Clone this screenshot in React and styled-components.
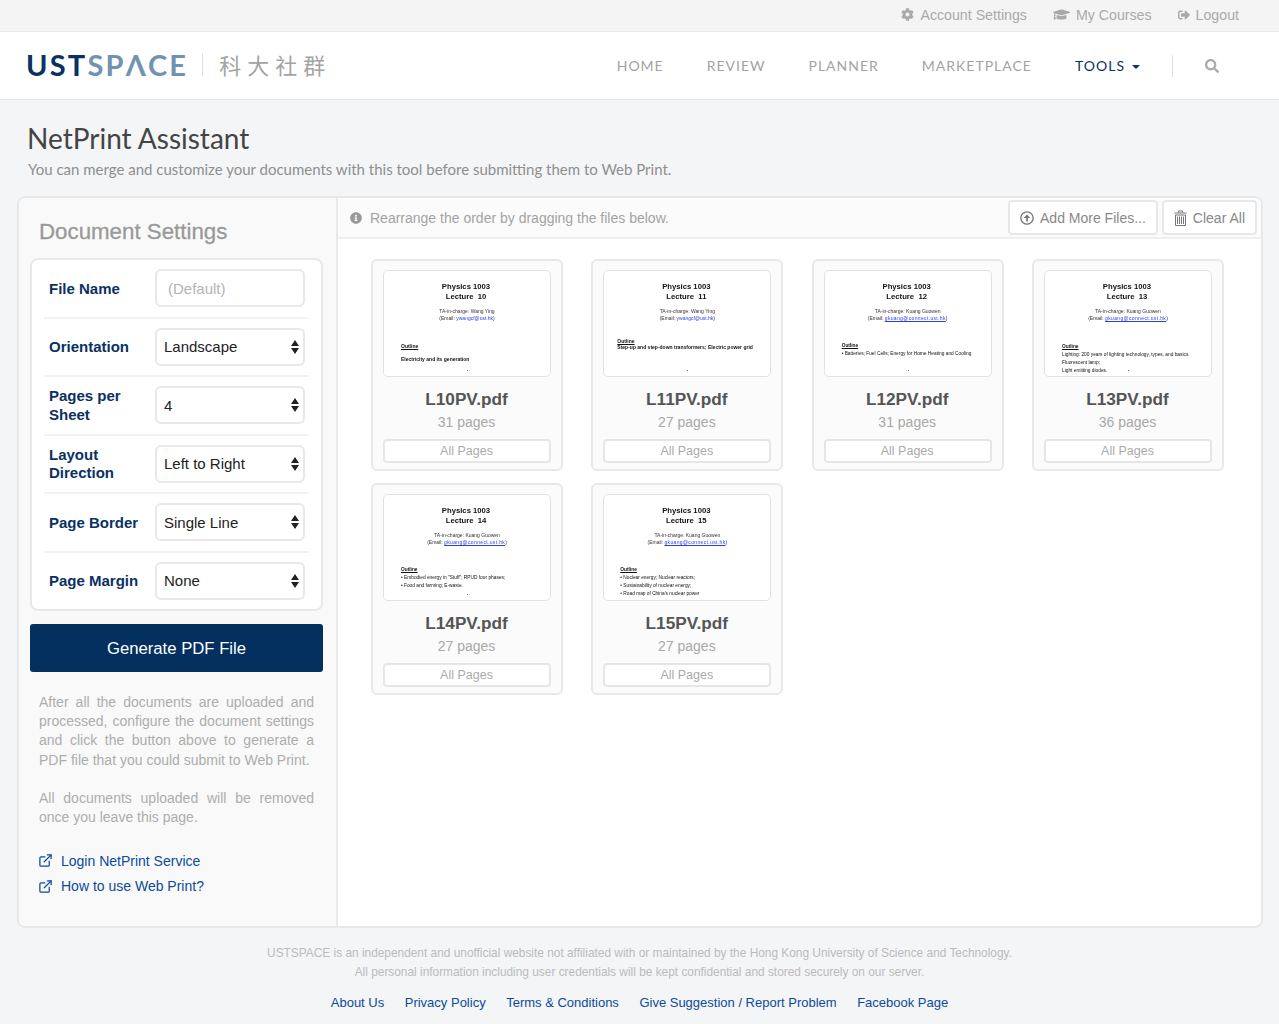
import React from 'react';
import styled, { createGlobalStyle } from 'styled-components';
import { FaCog, FaGraduationCap, FaSignOutAlt, FaInfoCircle, FaRegArrowAltCircleUp, FaSearch } from 'react-icons/fa';
import { ExternalLink } from 'lucide-react';

const GlobalStyle = createGlobalStyle`
  html, body { margin: 0; padding: 0; background: #f4f5f7; }
  body { font-family: "Liberation Sans", Arial, sans-serif; }
  * { box-sizing: border-box; }
`;

const Page = styled.div`
  width: 1279px;
  height: 1024px;
  overflow: hidden;
  background: #f4f5f7;
`;

const TopBar = styled.div`
  height: 32px;
  background: #f4f4f4;
  border-bottom: 1px solid #e8e8e8;
  display: flex;
  justify-content: flex-end;
  align-items: center;
  gap: 26px;
  padding: 0 40px 2px 0;
`;

const TopLink = styled.a`
  display: flex;
  align-items: center;
  gap: ${p => p.$gap || 6}px;
  font-size: 14.2px;
  color: #aaa;
  svg { font-size: ${p => p.$icon || 13}px; color: #aaa; }
`;

const Header = styled.header`
  height: 68px;
  background: #fff;
  border-bottom: 1px solid #e6e6e6;
  display: flex;
  align-items: center;
  padding: 0 60px 0 26px;
`;

const Logo = styled.div`
  display: flex;
  align-items: center;
  flex: 1;
  margin-top: -2px;
`;

const LogoWord = styled.span`
  font-family: Lato, sans-serif;
  font-weight: 700;
  font-size: 29px;
  letter-spacing: 2.2px;
  line-height: 1;
  color: #0a3161;
  span { color: #7193b2; }
`;

const LogoRule = styled.i`
  width: 1px;
  height: 22px;
  background: #ddd;
  margin: 0 16px 0 14px;
`;

const LogoChinese = styled.span`
  margin-top: -2px;
  font-family: "Noto Sans CJK TC", sans-serif;
  font-size: 22px;
  letter-spacing: 6px;
  line-height: 1;
  color: #a3a3a3;
`;

const Nav = styled.nav`
  display: flex;
  align-items: center;
  gap: 43px;
`;

const NavLink = styled.a`
  font-family: Lato, sans-serif;
  font-size: 14px;
  letter-spacing: 1px;
  color: ${p => (p.$active ? '#0a3161' : '#a3a3a3')};
  display: flex;
  align-items: center;
`;

const Caret = styled.i`
  width: 0;
  height: 0;
  margin-left: 7px;
  margin-top: 3px;
  border-left: 4px solid transparent;
  border-right: 4px solid transparent;
  border-top: 4px solid #0a3161;
`;

const NavRule = styled.i`
  width: 1px;
  height: 22px;
  background: #ddd;
  margin-left: -11px;
`;

const SearchBtn = styled.span`
  display: flex;
  color: #aaa;
  font-size: 14px;
  margin-left: -11px;
`;

const TitleBlock = styled.div`
  padding: 21px 28px 0;
  height: 96px;
`;

const Title = styled.h1`
  margin: 0 0 0 -1px;
  font-family: Lato, sans-serif;
  font-weight: 400;
  font-size: 28px;
  line-height: 34px;
  color: #444;
`;

const Subtitle = styled.p`
  margin: 4px 0 0;
  font-family: Lato, sans-serif;
  font-size: 15px;
  line-height: 20px;
  color: #8f8f8f;
`;

const Panel = styled.div`
  margin: 0 16px 0 17px;
  height: 732px;
  background: #fff;
  border: 2px solid #e7e8e9;
  border-radius: 8px;
  overflow: hidden;
  display: flex;
`;

const Sidebar = styled.aside`
  width: 319px;
  flex: none;
  background: #f9f9f9;
  border-right: 2px solid #e9e9e9;
  padding: 20px 13px 0 11px;
`;

const SideTitle = styled.h2`
  margin: 0 0 13px 9px;
  font-size: 22.3px;
  line-height: 27px;
  font-weight: 400;
  -webkit-text-stroke: 0.3px #999;
  color: #999;
`;

const FormBox = styled.div`
  background: #fff;
  border: 2px solid #e8e8e8;
  border-radius: 8px;
  padding: 0 12px;
`;

const Row = styled.div`
  height: ${p => (p.$last ? '56.5px' : '58.5px')};
  display: flex;
  align-items: center;
  justify-content: space-between;
  padding: 0 4px 0 5px;
  border-bottom: ${p => (p.$last ? 'none' : '2px solid #f2f2f2')};
`;

const Label = styled.label`
  width: 100px;
  padding-top: 1px;
  font-size: 15px;
  font-weight: 700;
  line-height: 18.5px;
  color: #0a3161;
`;

const TextInput = styled.input`
  width: 150px;
  height: 38px;
  border: 2px solid #e8e8e8;
  border-radius: 6px;
  padding: 0 11px;
  font: 15px "Liberation Sans", Arial, sans-serif;
  background: #fff;
  &::placeholder { color: #b4b4b4; opacity: 1; }
`;

const SelectWrap = styled.div`
  position: relative;
  width: 150px;
  height: 38px;
`;

const Select = styled.select`
  width: 100%;
  height: 100%;
  appearance: none;
  border: 2px solid #e8e8e8;
  border-radius: 6px;
  padding: 0 0 0 7px;
  font: 15px "Liberation Sans", Arial, sans-serif;
  color: #222;
  background: #fff;
`;

const SelectArrows = styled.svg`
  position: absolute;
  right: 6px;
  top: 12px;
  width: 8px;
  height: 14px;
`;

const Generate = styled.button`
  display: block;
  width: 293px;
  height: 48px;
  margin-top: 13px;
  padding-top: 2px;
  border: none;
  border-radius: 3px;
  background: #03305f;
  color: #fff;
  font: 16.7px "Liberation Sans", Arial, sans-serif;
`;

const Note = styled.p`
  margin: ${p => p.$top}px 0 0;
  padding: 0 9px;
  font-size: 14px;
  line-height: 19.2px;
  color: #adadad;
  text-align: justify;
`;

const SideLink = styled.a`
  display: flex;
  align-items: center;
  gap: 8px;
  padding-left: 8px;
  height: 25.5px;
  font-size: 14px;
  color: #0d4a9a;
  svg { width: 15px; height: 15px; }
`;

const SideLinks = styled.div`
  margin-top: 21px;
`;

const Main = styled.main`
  flex: 1;
  min-width: 0;
`;

const Toolbar = styled.div`
  height: 41px;
  background: #fbfbfb;
  border-bottom: 2px solid #efefef;
  display: flex;
  align-items: center;
  padding: 0 4px 0 12px;
  gap: 4px;
`;

const Hint = styled.div`
  flex: 1;
  display: flex;
  align-items: center;
  gap: 8px;
  font-size: 14px;
  color: #a3a3a3;
  svg { font-size: 12px; color: #999; }
`;

const ToolButton = styled.button`
  height: 35px;
  padding: 0 10px;
  display: flex;
  align-items: center;
  gap: 6px;
  background: #fff;
  border: 2px solid #e8e8e8;
  border-radius: 4px;
  font: 14px "Liberation Sans", Arial, sans-serif;
  color: #888;
  svg { font-size: 14px; color: #777; flex: none; }
`;

const Grid = styled.div`
  display: grid;
  grid-template-columns: repeat(4, 192px);
  column-gap: 28.33px;
  row-gap: 12px;
  padding: 20px 0 0 33px;
`;

const Card = styled.div`
  height: 212px;
  background: #fbfbfb;
  border: 2px solid #e8e8e8;
  border-radius: 6px;
  padding: 9px 10px 0;
  display: flex;
  flex-direction: column;
  align-items: center;
`;

const Thumb = styled.div`
  position: relative;
  width: 168px;
  height: 107px;
  flex: none;
  background: #fff;
  border: 1.5px solid #e2e2e2;
  border-radius: 5px;
  overflow: hidden;
  padding-top: 11px;
  color: #111;
  filter: blur(0.25px);
`;

const ThumbTitle = styled.div`
  padding-right: 2px;
  text-align: center;
  font-size: 7.7px;
  font-weight: 700;
  line-height: 9.6px;
  white-space: pre;
`;

const ThumbMeta = styled.div`
  margin-top: 7px;
  text-align: center;
  font-size: 5px;
  line-height: 7.2px;
  color: #333;
  span {
    color: #2a3fe0;
    letter-spacing: ${p => (p.$plain ? '0' : '0.35px')};
    text-decoration: ${p => (p.$plain ? 'none' : 'underline')};
  }
`;

const ThumbBody = styled.div`
  margin-top: ${p => p.$top}px;
  padding-left: ${p => p.$left}px;
  font-size: ${p => (p.$bold ? 5 : 4.8)}px;
  line-height: ${p => p.$line}px;
  white-space: nowrap;
  font-weight: ${p => (p.$bold ? 700 : 400)};
  u { display: block; font-weight: 700; margin-bottom: ${p => p.$under}px; }
`;

const ThumbDot = styled.i`
  position: absolute;
  left: 50%;
  bottom: 5px;
  width: 1px;
  height: 1px;
  background: #777;
`;

const FileName = styled.div`
  margin-top: 12px;
  padding-right: 1px;
  font-size: 17.2px;
  line-height: 20px;
  font-weight: 700;
  color: #555;
`;

const PageCount = styled.div`
  margin-top: 4px;
  padding-right: 1px;
  font-size: 14px;
  line-height: 18px;
  color: #a8a8a8;
`;

const PageRange = styled.div`
  margin-top: 8px;
  width: 168px;
  height: 24px;
  flex: none;
  padding-right: 1px;
  background: #fff;
  border: 2px solid #e6e6e6;
  border-radius: 4px;
  text-align: center;
  font-size: 12.5px;
  line-height: 21px;
  color: #aaa;
`;

const Footer = styled.footer`
  padding-top: 16px;
  text-align: center;
  font-size: 11.88px;
  line-height: 19px;
  color: #bbb;
`;

const FooterLinks = styled.div`
  margin-top: 11px;
  display: flex;
  justify-content: center;
  gap: 20.5px;
  font-size: 13px;
  line-height: 19px;
  color: #0d4a9a;
`;

const settings = [
  { label: 'Orientation', value: 'Landscape' },
  { label: 'Pages per Sheet', value: '4' },
  { label: 'Layout Direction', value: 'Left to Right' },
  { label: 'Page Border', value: 'Single Line' },
  { label: 'Page Margin', value: 'None', last: true },
];

const files = [
  { name: 'L10PV.pdf', pages: 31, lecture: 'Lecture  10', ta: 'TA-in-charge: Wang Ying', email: 'ywangcf@ust.hk', plain: true, top: 19, left: 17, line: 9, under: 4, bold: true, lines: ['Electricity and its generation'] },
  { name: 'L11PV.pdf', pages: 27, lecture: 'Lecture  11', ta: 'TA-in-charge: Wang Ying', email: 'ywangcf@ust.hk', plain: true, top: 15, left: 13, line: 6, under: 0, bold: true, lines: ['Step-up and step-down transformers;  Electric power grid'] },
  { name: 'L12PV.pdf', pages: 31, lecture: 'Lecture  12', ta: 'TA-in-charge: Kuang Guowen', email: 'gkuang@connect.ust.hk', top: 19, left: 17, line: 7, under: 1, lines: ['• Batteries; Fuel Cells; Energy for Home Heating and Cooling'] },
  { name: 'L13PV.pdf', pages: 36, lecture: 'Lecture  13', ta: 'TA-in-charge: Kuang Guowen', email: 'gkuang@connect.ust.hk', top: 20, left: 17, line: 8, under: 0, lines: ['Lighting: 200 years of lighting technology, types, and basics.', 'Fluorescent lamp;', 'Light emitting diodes.'] },
  { name: 'L14PV.pdf', pages: 27, lecture: 'Lecture  14', ta: 'TA-in-charge: Kuang Guowen', email: 'gkuang@connect.ust.hk', top: 19, left: 17, line: 8, under: 0, lines: ['• Embodied energy in "Stuff"; RPUD four phases;', '• Food and farming; E-waste.'] },
  { name: 'L15PV.pdf', pages: 27, lecture: 'Lecture  15', ta: 'TA-in-charge: Kuang Guowen', email: 'gkuang@connect.ust.hk', top: 19, left: 16, line: 8, under: 0, lines: ['• Nuclear energy; Nuclear reactors;', '• Sustainability of nuclear energy;', '• Road map of  China\'s nuclear power'] },
];

function TrashIcon() {
  return (
    <svg width="13" height="16" viewBox="0 0 13 16" fill="none" stroke="currentColor" strokeWidth="1">
      <path d="M4.500 2.500V1h4v1.500M.5 3h12M1.500 5h10v10.500h-10z" />
      <path d="M3.500 6.500v7.500M5.500 6.500v7.500M7.500 6.500v7.500M9.500 6.500v7.500" />
    </svg>
  );
}

function SelectField({ label, value, last }) {
  return (
    <Row $last={last}>
      <Label>{label}</Label>
      <SelectWrap>
        <Select defaultValue={value}>
          <option>{value}</option>
        </Select>
        <SelectArrows viewBox="0 0 8 14">
          <path d="M4 0 8 6H0zM4 14 0 8h8z" fill="#222" />
        </SelectArrows>
      </SelectWrap>
    </Row>
  );
}

function FileCard({ file }) {
  return (
    <Card>
      <Thumb>
        <ThumbTitle>{`Physics 1003\n${file.lecture}`}</ThumbTitle>
        <ThumbMeta $plain={file.plain}>
          {file.ta}<br />(Email: <span>{file.email}</span>)
        </ThumbMeta>
        <ThumbBody $top={file.top} $left={file.left} $line={file.line} $under={file.under} $bold={file.bold}>
          <u>Outline</u>
          {file.lines.map(l => <div key={l}>{l}</div>)}
        </ThumbBody>
        <ThumbDot />
      </Thumb>
      <FileName>{file.name}</FileName>
      <PageCount>{file.pages} pages</PageCount>
      <PageRange>All Pages</PageRange>
    </Card>
  );
}

export default function App() {
  return (
    <Page>
      <GlobalStyle />
      <TopBar>
        <TopLink><FaCog />Account Settings</TopLink>
        <TopLink $icon={17}><FaGraduationCap />My Courses</TopLink>
        <TopLink $icon={12}><FaSignOutAlt />Logout</TopLink>
      </TopBar>
      <Header>
        <Logo>
          <LogoWord>UST<span>SP&#923;CE</span></LogoWord>
          <LogoRule />
          <LogoChinese>科大社群</LogoChinese>
        </Logo>
        <Nav>
          <NavLink>HOME</NavLink>
          <NavLink>REVIEW</NavLink>
          <NavLink>PLANNER</NavLink>
          <NavLink>MARKETPLACE</NavLink>
          <NavLink $active>TOOLS<Caret /></NavLink>
          <NavRule />
          <SearchBtn><FaSearch /></SearchBtn>
        </Nav>
      </Header>
      <TitleBlock>
        <Title>NetPrint Assistant</Title>
        <Subtitle>You can merge and customize your documents with this tool before submitting them to Web Print.</Subtitle>
      </TitleBlock>
      <Panel>
        <Sidebar>
          <SideTitle>Document Settings</SideTitle>
          <FormBox>
            <Row>
              <Label>File Name</Label>
              <TextInput placeholder="(Default)" />
            </Row>
            {settings.map(s => <SelectField key={s.label} {...s} />)}
          </FormBox>
          <Generate>Generate PDF File</Generate>
          <Note $top={21}>After all the documents are uploaded and processed, configure the document settings and click the button above to generate a PDF file that you could submit to Web Print.</Note>
          <Note $top={19}>All documents uploaded will be removed once you leave this page.</Note>
          <SideLinks>
            <SideLink><ExternalLink />Login NetPrint Service</SideLink>
            <SideLink><ExternalLink />How to use Web Print?</SideLink>
          </SideLinks>
        </Sidebar>
        <Main>
          <Toolbar>
            <Hint><FaInfoCircle />Rearrange the order by dragging the files below.</Hint>
            <ToolButton><FaRegArrowAltCircleUp />Add More Files...</ToolButton>
            <ToolButton><TrashIcon />Clear All</ToolButton>
          </Toolbar>
          <Grid>
            {files.map(f => <FileCard key={f.name} file={f} />)}
          </Grid>
        </Main>
      </Panel>
      <Footer>
        USTSPACE is an independent and unofficial website not affiliated with or maintained by the Hong Kong University of Science and Technology.<br />
        All personal information including user credentials will be kept confidential and stored securely on our server.
        <FooterLinks>
          <a>About Us</a>
          <a>Privacy Policy</a>
          <a>Terms &amp; Conditions</a>
          <a>Give Suggestion / Report Problem</a>
          <a>Facebook Page</a>
        </FooterLinks>
      </Footer>
    </Page>
  );
}
